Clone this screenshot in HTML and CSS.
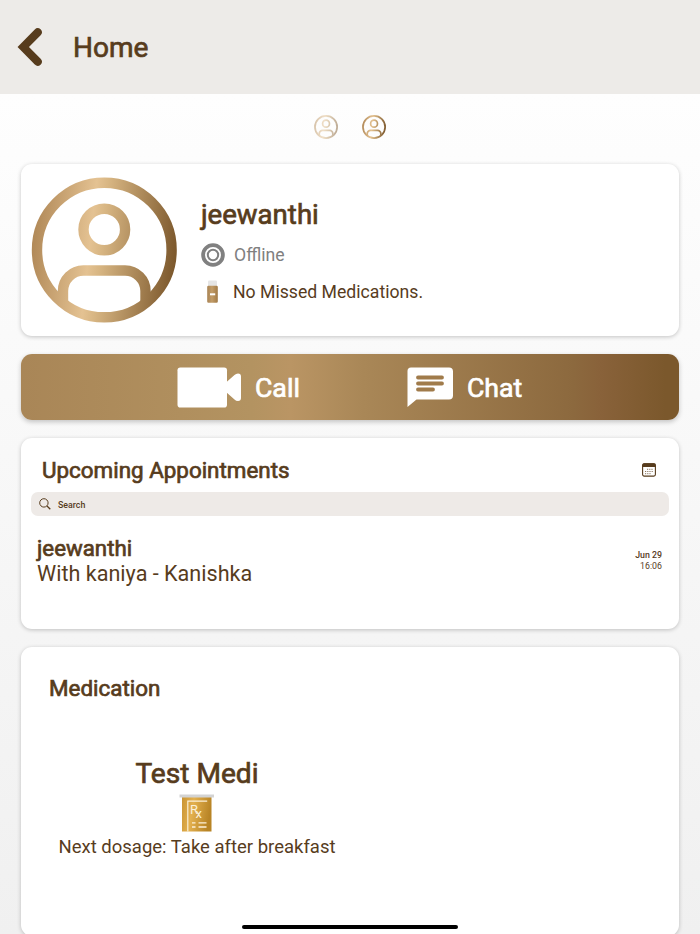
FILE: index.html
```html
<!DOCTYPE html>
<html lang="en">
  <head>
    <title>Home</title>
    <meta charset="UTF-8">
    <meta name="viewport" content="width=device-width, initial-scale=1">
    <link rel="stylesheet" href="styles.css">
  </head>
  <body>
    <!-- shared gradients and symbols -->
    <svg class="defs" width="0" height="0" aria-hidden="true">
      <defs>
        <linearGradient id="gold" gradientUnits="userSpaceOnUse" x1="0" y1="65" x2="146" y2="81">
          <stop offset="0" stop-color="#b08857"/>
          <stop offset=".4" stop-color="#e4c292"/>
          <stop offset=".48" stop-color="#d8b683"/>
          <stop offset=".95" stop-color="#835f33"/>
          <stop offset="1" stop-color="#7b572b"/>
        </linearGradient>
        <linearGradient id="bottle" x1="0" x2="1" y1="0" y2="0">
          <stop offset="0" stop-color="#a98455"/>
          <stop offset=".45" stop-color="#c29c67"/>
          <stop offset="1" stop-color="#a17a47"/>
        </linearGradient>
        <linearGradient id="amber" x1="0" x2="1" y1="0" y2=".2">
          <stop offset="0" stop-color="#c99433"/>
          <stop offset=".4" stop-color="#e3b04f"/>
          <stop offset="1" stop-color="#b88425"/>
        </linearGradient>
        <clipPath id="round"><circle cx="73.3" cy="73" r="72"/></clipPath>
      </defs>
      <symbol id="person" viewBox="0 0 146 146">
        <g fill="none" stroke="url(#gold)" stroke-width="10.4">
          <circle cx="73.3" cy="73" r="67.3"/>
          <circle cx="73.3" cy="52.5" r="20.8"/>
          <path clip-path="url(#round)" d="M32 127V114a20.5 20.5 0 0 1 20.5-20.5H94a20.5 20.5 0 0 1 20.5 20.5v13"/>
        </g>
      </symbol>
    </svg>

    <header class="topbar">
      <svg class="back" width="26" height="40" viewBox="0 0 26 40"><path d="M20.700 5.300 6.300 20l14.400 14.700" fill="none" stroke="#573c1d" stroke-width="8.2" stroke-linecap="round"/></svg>
      <h1 class="title strong">Home</h1>
    </header>

    <main class="content">
      <nav class="people">
        <svg class="person-tab faded"><use href="#person"/></svg>
        <svg class="person-tab"><use href="#person"/></svg>
      </nav>

      <section class="card profile">
        <svg class="avatar"><use href="#person"/></svg>
        <div class="details">
          <h2 class="name strong">jeewanthi</h2>
          <p class="status">
            <svg width="24" height="24" viewBox="0 0 24 24" fill="none" stroke="#808080"><circle cx="12" cy="12" r="9.9" stroke-width="3.8"/><circle cx="12" cy="12" r="5.2" stroke-width="2"/></svg>
            Offline
          </p>
          <p class="missed">
            <svg width="24" height="24" viewBox="0 0 24 24"><path d="M7 1.5q0-1 1-1h7q1 0 1 1V6H7z" fill="#e5e5e5"/><path d="M6.2 7q0-1.3 1.3-1.3h8q1.3 0 1.3 1.3v14.500q0 1.300-1.300 1.300h-8q-1.300 0-1.300-1.300z" fill="url(#bottle)"/><path d="M9 14.300h5.200" stroke="#fff" stroke-width="2"/></svg>
            No Missed Medications.
          </p>
        </div>
      </section>

      <section class="actions">
        <a class="action call strong">
          <svg width="64" height="41" viewBox="0 0 64 41" fill="#fff"><rect x=".5" y=".500" width="49.500" height="40" rx="2.800"/><path d="M49 15.500 57.500 8Q59 6.500 61 6.500q3 0 3 3v21.500q0 3-3 3-2 0-3.500-1.500L49 25z"/></svg>
          <span>Call</span>
        </a>
        <a class="action chat strong">
          <svg width="46" height="41" viewBox="0 0 46 41"><path d="M4 .5h38q4 0 4 4v24q0 4-4 4H9.500L.500 40V4Q.500.500 4 .500z" fill="#fff"/><path d="M11 10.500h24M11 16.500h24M11 22.500h15" stroke="#a07b4b" stroke-width="3.800" stroke-linecap="round"/></svg>
          <span>Chat</span>
        </a>
      </section>

      <section class="card appointments">
        <div class="heading">
          <h2 class="subtitle strong">Upcoming Appointments</h2>
          <svg width="14" height="14" viewBox="0 0 14 14"><rect x=".6" y=".9" width="12.800" height="12.200" rx="1.600" fill="#fff" stroke="#573c1d" stroke-width="1.100"/><path d="M.3 4V2Q.3.300 2 .300h10q1.700 0 1.700 1.700v2z" fill="#573c1d"/><path d="M5 6.300h6M3 8.500h8M3 10.700h6" stroke="#8d7860" stroke-width="1" stroke-dasharray="1.200 1"/></svg>
        </div>
        <div class="search">
          <svg width="12" height="12" viewBox="0 0 12 12" fill="none" stroke="#573c1d"><circle cx="4.900" cy="4.900" r="4.200" stroke-width="1"/><path d="m8 8 3.300 3.200" stroke-width="1.300"/></svg>
          <span>Search</span>
        </div>
        <div class="appointment">
          <div>
            <h3 class="who strong">jeewanthi</h3>
            <p class="with">With kaniya - Kanishka</p>
          </div>
          <div class="when">
            <span class="date">Jun 29</span>
            <span class="time">16:06</span>
          </div>
        </div>
      </section>

      <section class="card medication">
        <h2 class="subtitle strong">Medication</h2>
        <div class="dose">
          <h3 class="drug strong">Test Medi</h3>
          <svg width="36" height="38" viewBox="0 0 36 38">
            <path d="M3 3h29.500v34.500H3z" fill="url(#amber)"/>
            <path d="M.5.500h34.500v3H.5z" fill="#d3d3d3"/>
            <path d="M8.800 37.500V7.200h19.400" fill="none" stroke="#fbf0d8" stroke-width="1.200"/>
            <text class="rx" x="11" y="20">R<tspan dx="-2.500" dy="4">x</tspan></text>
            <path d="M13 28.800h3.500m3 0h8M13 33h3.500m3 0h8" stroke="#fbf0d8" stroke-width="1.300"/>
          </svg>
          <p class="next">Next dosage: Take after breakfast</p>
        </div>
      </section>
    </main>

    <div class="home-indicator"></div>
  </body>
</html>
```

FILE: styles.css
```css
:root {
  --color-txt: #573c1d;
  --color-muted: #808080;
  --color-bar: #edebe8;
}

* {
  box-sizing: border-box;
}

body {
  position: relative;
  margin: 0;
  height: 934px;
  overflow: hidden;
  display: flex;
  flex-direction: column;
  font-family: Roboto, "Liberation Sans", sans-serif;
  color: var(--color-txt);
  background: #fff;
}

h1, h2, h3, p {
  margin: 0;
  font-weight: 400;
  white-space: nowrap;
}

svg {
  display: block;
  flex: none;
}

.defs {
  position: absolute;
}

/* regular weight, thickened */
.strong {
  -webkit-text-stroke: 0.7px currentColor;
}

.topbar {
  flex: none;
  display: flex;
  align-items: center;
  gap: 30px;
  height: 94px;
  padding-left: 17px;
  background: var(--color-bar);
}

.title {
  font-size: 28px;
  line-height: 34px;
  padding-top: 1px;
}

.content {
  flex: 1;
  min-height: 0;
  display: flex;
  flex-direction: column;
  gap: 18px;
  padding: 21px 21px 0;
  background: linear-gradient(#fefefe, #f0f0f0);
}

.people {
  flex: none;
  display: flex;
  justify-content: center;
  gap: 24px;
  height: 31px;
}

.person-tab {
  width: 24px;
  height: 24px;
}

.faded {
  opacity: 0.5;
}

.card {
  flex: none;
  background: #fff;
  border-radius: 11px;
  box-shadow: 0 1px 4px rgba(0, 0, 0, 0.22);
}

.profile {
  display: flex;
  height: 172px;
  padding: 13px 10px;
  gap: 24px;
}

.avatar {
  width: 146px;
  height: 146px;
}

.details {
  padding-top: 21px;
}

.name {
  font-size: 27.6px;
  line-height: 34px;
}

.status, .missed {
  display: flex;
  align-items: center;
  font-size: 17.65px;
  height: 24px;
}

.status {
  gap: 9px;
  margin-top: 11px;
  color: var(--color-muted);
}

.missed {
  gap: 8px;
  margin-top: 13px;
}

.actions {
  flex: none;
  display: flex;
  height: 66px;
  padding-left: 156px;
  border-radius: 11px;
  background: linear-gradient(90deg, #a98657, #b39361 35%, #ba9564 41%, #a98757 52%, #8c693e 84%, #89623a 88%, #7b582c 98%);
  box-shadow: 0 2px 5px rgba(0, 0, 0, 0.22);
}

.action {
  display: flex;
  align-items: center;
  gap: 14px;
  font-size: 26.7px;
  color: #fff;
}

.action span {
  padding-top: 2px;
}

.call {
  width: 230px;
}

.appointments {
  height: 191px;
  padding: 16px 10px 0;
}

.heading {
  display: flex;
  align-items: center;
  justify-content: space-between;
  height: 32px;
  padding: 0 13px 0 11px;
}

.subtitle {
  font-size: 22.4px;
  line-height: 32px;
}

.search {
  display: flex;
  align-items: center;
  gap: 7px;
  height: 24px;
  margin-top: 6px;
  padding-left: 8px;
  border-radius: 7px;
  background: #eeeae7;
  font-size: 8.8px;
  font-weight: 500;
}

.search span {
  padding-top: 1px;
}

.appointment {
  display: flex;
  justify-content: space-between;
  padding: 19px 7px 0 6px;
}

.who {
  font-size: 22.3px;
  line-height: 26px;
}

.with {
  font-size: 21.6px;
  line-height: 26px;
}

.when {
  display: flex;
  flex-direction: column;
  align-items: flex-end;
  padding-top: 15px;
  font-size: 8.8px;
  line-height: 11px;
}

.date {
  font-weight: 500;
}

.medication {
  height: 289px;
  padding: 25px 28px 0;
}

.dose {
  display: flex;
  flex-direction: column;
  align-items: center;
  width: 296px;
  margin-top: 53px;
}

.drug {
  font-size: 28.1px;
  line-height: 34px;
  margin-bottom: 3px;
}

.rx {
  font-size: 13px;
  fill: #fbf0d8;
}

.next {
  margin-top: 3px;
  font-size: 18.5px;
  line-height: 24px;
}

.home-indicator {
  position: absolute;
  left: 242px;
  bottom: 5px;
  width: 216px;
  height: 4px;
  border-radius: 2px;
  background: #000;
}
```
